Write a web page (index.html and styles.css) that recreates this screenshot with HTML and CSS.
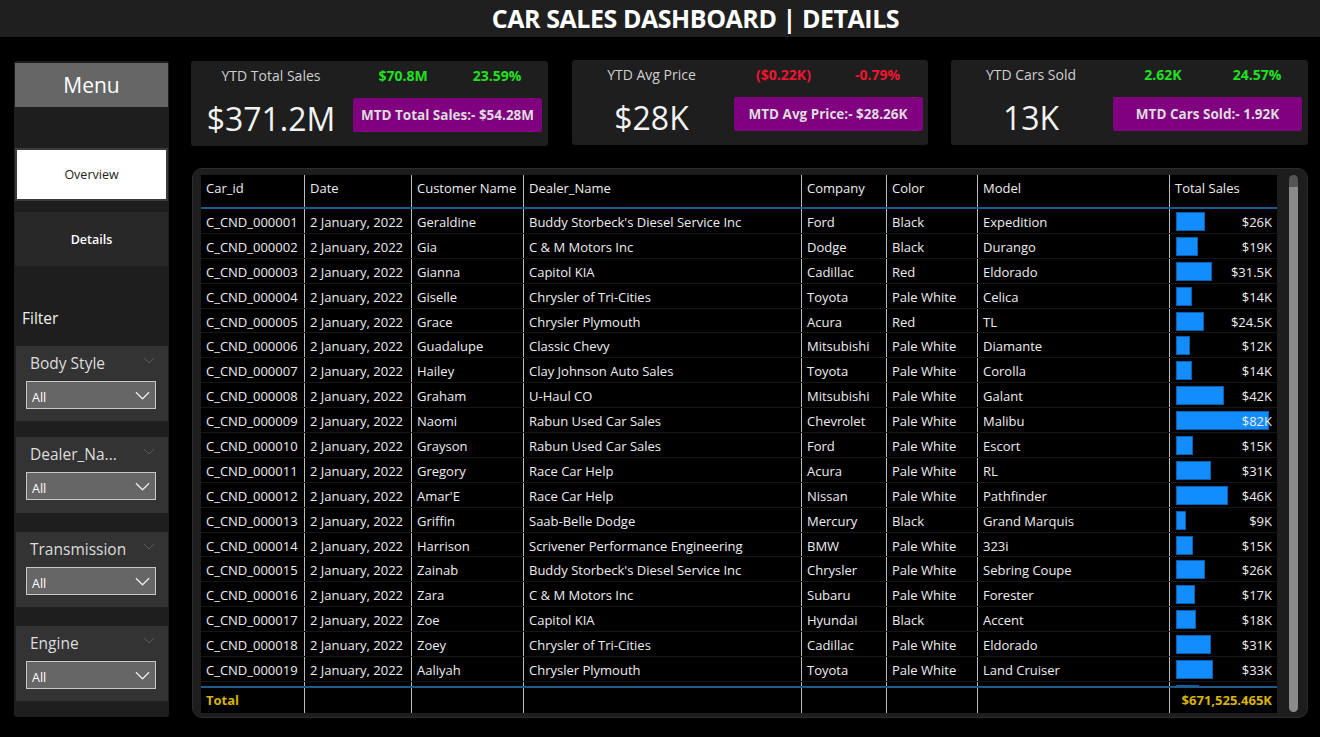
FILE: index.html
```html
<!DOCTYPE html>
<html lang="en">
<head>
<meta charset="utf-8">
<title>Car Sales Dashboard | Details</title>
<link rel="stylesheet" href="styles.css">
</head>
<body>
<header class="topbar"><h1 class="title">CAR SALES DASHBOARD | DETAILS</h1></header>
<div class="main">
  <aside class="sidebar">
    <div class="menu-btn">Menu</div>
    <div class="nav-btn nav-overview">Overview</div>
    <div class="nav-btn nav-details">Details</div>
    <div class="filter-label">Filter</div>
    <div class="slicer s1">
      <div class="slicer-title"><span>Body Style</span><svg class="chev-faint" viewBox="0 0 12 7"><path d="M1 1l5 5 5-5" fill="none" stroke="currentColor" stroke-width="1"/></svg></div>
      <div class="dropdown"><span>All</span><svg class="chev" viewBox="0 0 16 9"><path d="M1 1l7 7 7-7" fill="none" stroke="currentColor" stroke-width="1.3"/></svg></div>
    </div>
    <div class="slicer s2">
      <div class="slicer-title"><span>Dealer_Na...</span><svg class="chev-faint" viewBox="0 0 12 7"><path d="M1 1l5 5 5-5" fill="none" stroke="currentColor" stroke-width="1"/></svg></div>
      <div class="dropdown"><span>All</span><svg class="chev" viewBox="0 0 16 9"><path d="M1 1l7 7 7-7" fill="none" stroke="currentColor" stroke-width="1.3"/></svg></div>
    </div>
    <div class="slicer s3">
      <div class="slicer-title"><span>Transmission</span><svg class="chev-faint" viewBox="0 0 12 7"><path d="M1 1l5 5 5-5" fill="none" stroke="currentColor" stroke-width="1"/></svg></div>
      <div class="dropdown"><span>All</span><svg class="chev" viewBox="0 0 16 9"><path d="M1 1l7 7 7-7" fill="none" stroke="currentColor" stroke-width="1.3"/></svg></div>
    </div>
    <div class="slicer s4">
      <div class="slicer-title"><span>Engine</span><svg class="chev-faint" viewBox="0 0 12 7"><path d="M1 1l5 5 5-5" fill="none" stroke="currentColor" stroke-width="1"/></svg></div>
      <div class="dropdown"><span>All</span><svg class="chev" viewBox="0 0 16 9"><path d="M1 1l7 7 7-7" fill="none" stroke="currentColor" stroke-width="1.3"/></svg></div>
    </div>
  </aside>

  <section class="content">
    <div class="kpis">
      <div class="kpi k1">
        <div class="kpi-label">YTD Total Sales</div>
        <div class="kpi-delta up">$70.8M</div>
        <div class="kpi-pct up">23.59%</div>
        <div class="kpi-value">$371.2M</div>
        <div class="kpi-mtd">MTD Total Sales:- $54.28M</div>
      </div>
      <div class="kpi k2">
        <div class="kpi-label">YTD Avg Price</div>
        <div class="kpi-delta down">($0.22K)</div>
        <div class="kpi-pct down">-0.79%</div>
        <div class="kpi-value">$28K</div>
        <div class="kpi-mtd">MTD Avg Price:- $28.26K</div>
      </div>
      <div class="kpi k3">
        <div class="kpi-label">YTD Cars Sold</div>
        <div class="kpi-delta up">2.62K</div>
        <div class="kpi-pct up">24.57%</div>
        <div class="kpi-value">13K</div>
        <div class="kpi-mtd">MTD Cars Sold:- 1.92K</div>
      </div>
    </div>

    <div class="table-panel">
      <div class="table">
        <div class="row head">
          <div class="c">Car_id</div><div class="c">Date</div><div class="c">Customer Name</div><div class="c">Dealer_Name</div><div class="c">Company</div><div class="c">Color</div><div class="c">Model</div><div class="c">Total Sales</div>
        </div>
        <div class="body">
          <div class="row"><div class="c">C_CND_000001</div><div class="c">2 January, 2022</div><div class="c">Geraldine</div><div class="c">Buddy Storbeck's Diesel Service Inc</div><div class="c">Ford</div><div class="c">Black</div><div class="c">Expedition</div><div class="c sales"><span class="bar" style="width:29px"></span><span class="v">$26K</span></div></div>
          <div class="row"><div class="c">C_CND_000002</div><div class="c">2 January, 2022</div><div class="c">Gia</div><div class="c">C &amp; M Motors Inc</div><div class="c">Dodge</div><div class="c">Black</div><div class="c">Durango</div><div class="c sales"><span class="bar" style="width:22px"></span><span class="v">$19K</span></div></div>
          <div class="row"><div class="c">C_CND_000003</div><div class="c">2 January, 2022</div><div class="c">Gianna</div><div class="c">Capitol KIA</div><div class="c">Cadillac</div><div class="c">Red</div><div class="c">Eldorado</div><div class="c sales"><span class="bar" style="width:36px"></span><span class="v">$31.5K</span></div></div>
          <div class="row"><div class="c">C_CND_000004</div><div class="c">2 January, 2022</div><div class="c">Giselle</div><div class="c">Chrysler of Tri-Cities</div><div class="c">Toyota</div><div class="c">Pale White</div><div class="c">Celica</div><div class="c sales"><span class="bar" style="width:16px"></span><span class="v">$14K</span></div></div>
          <div class="row"><div class="c">C_CND_000005</div><div class="c">2 January, 2022</div><div class="c">Grace</div><div class="c">Chrysler Plymouth</div><div class="c">Acura</div><div class="c">Red</div><div class="c">TL</div><div class="c sales"><span class="bar" style="width:28px"></span><span class="v">$24.5K</span></div></div>
          <div class="row"><div class="c">C_CND_000006</div><div class="c">2 January, 2022</div><div class="c">Guadalupe</div><div class="c">Classic Chevy</div><div class="c">Mitsubishi</div><div class="c">Pale White</div><div class="c">Diamante</div><div class="c sales"><span class="bar" style="width:14px"></span><span class="v">$12K</span></div></div>
          <div class="row"><div class="c">C_CND_000007</div><div class="c">2 January, 2022</div><div class="c">Hailey</div><div class="c">Clay Johnson Auto Sales</div><div class="c">Toyota</div><div class="c">Pale White</div><div class="c">Corolla</div><div class="c sales"><span class="bar" style="width:16px"></span><span class="v">$14K</span></div></div>
          <div class="row"><div class="c">C_CND_000008</div><div class="c">2 January, 2022</div><div class="c">Graham</div><div class="c">U-Haul CO</div><div class="c">Mitsubishi</div><div class="c">Pale White</div><div class="c">Galant</div><div class="c sales"><span class="bar" style="width:48px"></span><span class="v">$42K</span></div></div>
          <div class="row"><div class="c">C_CND_000009</div><div class="c">2 January, 2022</div><div class="c">Naomi</div><div class="c">Rabun Used Car Sales</div><div class="c">Chevrolet</div><div class="c">Pale White</div><div class="c">Malibu</div><div class="c sales"><span class="bar" style="width:93px"></span><span class="v">$82K</span></div></div>
          <div class="row"><div class="c">C_CND_000010</div><div class="c">2 January, 2022</div><div class="c">Grayson</div><div class="c">Rabun Used Car Sales</div><div class="c">Ford</div><div class="c">Pale White</div><div class="c">Escort</div><div class="c sales"><span class="bar" style="width:17px"></span><span class="v">$15K</span></div></div>
          <div class="row"><div class="c">C_CND_000011</div><div class="c">2 January, 2022</div><div class="c">Gregory</div><div class="c">Race Car Help</div><div class="c">Acura</div><div class="c">Pale White</div><div class="c">RL</div><div class="c sales"><span class="bar" style="width:35px"></span><span class="v">$31K</span></div></div>
          <div class="row"><div class="c">C_CND_000012</div><div class="c">2 January, 2022</div><div class="c">Amar'E</div><div class="c">Race Car Help</div><div class="c">Nissan</div><div class="c">Pale White</div><div class="c">Pathfinder</div><div class="c sales"><span class="bar" style="width:52px"></span><span class="v">$46K</span></div></div>
          <div class="row"><div class="c">C_CND_000013</div><div class="c">2 January, 2022</div><div class="c">Griffin</div><div class="c">Saab-Belle Dodge</div><div class="c">Mercury</div><div class="c">Black</div><div class="c">Grand Marquis</div><div class="c sales"><span class="bar" style="width:10px"></span><span class="v">$9K</span></div></div>
          <div class="row"><div class="c">C_CND_000014</div><div class="c">2 January, 2022</div><div class="c">Harrison</div><div class="c">Scrivener Performance Engineering</div><div class="c">BMW</div><div class="c">Pale White</div><div class="c">323i</div><div class="c sales"><span class="bar" style="width:17px"></span><span class="v">$15K</span></div></div>
          <div class="row"><div class="c">C_CND_000015</div><div class="c">2 January, 2022</div><div class="c">Zainab</div><div class="c">Buddy Storbeck's Diesel Service Inc</div><div class="c">Chrysler</div><div class="c">Pale White</div><div class="c">Sebring Coupe</div><div class="c sales"><span class="bar" style="width:29px"></span><span class="v">$26K</span></div></div>
          <div class="row"><div class="c">C_CND_000016</div><div class="c">2 January, 2022</div><div class="c">Zara</div><div class="c">C &amp; M Motors Inc</div><div class="c">Subaru</div><div class="c">Pale White</div><div class="c">Forester</div><div class="c sales"><span class="bar" style="width:19px"></span><span class="v">$17K</span></div></div>
          <div class="row"><div class="c">C_CND_000017</div><div class="c">2 January, 2022</div><div class="c">Zoe</div><div class="c">Capitol KIA</div><div class="c">Hyundai</div><div class="c">Black</div><div class="c">Accent</div><div class="c sales"><span class="bar" style="width:20px"></span><span class="v">$18K</span></div></div>
          <div class="row"><div class="c">C_CND_000018</div><div class="c">2 January, 2022</div><div class="c">Zoey</div><div class="c">Chrysler of Tri-Cities</div><div class="c">Cadillac</div><div class="c">Pale White</div><div class="c">Eldorado</div><div class="c sales"><span class="bar" style="width:35px"></span><span class="v">$31K</span></div></div>
          <div class="row"><div class="c">C_CND_000019</div><div class="c">2 January, 2022</div><div class="c">Aaliyah</div><div class="c">Chrysler Plymouth</div><div class="c">Toyota</div><div class="c">Pale White</div><div class="c">Land Cruiser</div><div class="c sales"><span class="bar" style="width:37px"></span><span class="v">$33K</span></div></div>
          <div class="row"><div class="c"></div><div class="c"></div><div class="c"></div><div class="c"></div><div class="c"></div><div class="c"></div><div class="c"></div><div class="c sales"><span class="bar" style="width:23px"></span></div></div>
        </div>
        <div class="row total">
          <div class="c">Total</div><div class="c"></div><div class="c"></div><div class="c"></div><div class="c"></div><div class="c"></div><div class="c"></div><div class="c sales"><span class="v">$671,525.465K</span></div>
        </div>
      </div>
      <div class="scroll"><div class="thumb"></div></div>
    </div>
  </section>
</div>
</body>
</html>
```
FILE: styles.css
```css
* { box-sizing: border-box; }
html, body { margin: 0; padding: 0; }
body {
  width: 1320px;
  height: 737px;
  overflow: hidden;
  background: #000;
  font-family: "Open Sans", "Noto Sans", sans-serif;
  color: #eee;
}

.topbar {
  height: 37px;
  background: #1f1f1f;
  display: flex;
  align-items: center;
  justify-content: center;
}
.title {
  margin: 0;
  font-size: 25px;
  font-weight: 700;
  color: #fff;
  letter-spacing: -0.45px;
  line-height: 37px;
  padding-left: 71px;
}

.main {
  display: flex;
  gap: 22px;
  padding: 24px 12px 0 14px;
}

/* Sidebar */
.sidebar {
  width: 155px;
  height: 656px;
  background: #1e1e1e;
  border-radius: 3px;
  display: flex;
  flex-direction: column;
  padding: 2px 1px 0 2px;
}
.menu-btn {
  height: 44px;
  background: #666;
  color: #fff;
  font-size: 21px;
  display: flex;
  align-items: center;
  justify-content: center;
  margin-left: -1px;
}
.nav-btn {
  height: 53px;
  display: flex;
  align-items: center;
  justify-content: center;
  font-size: 12.5px;
  margin-left: -1px;
}
.nav-overview {
  margin-top: 41px;
  background: #fff;
  color: #222;
  border: 2px solid #3c3c3c;
}
.nav-details {
  margin-top: 11px;
  height: 54px;
  background: #282828;
  color: #fff;
  font-weight: 600;
}
.filter-label {
  margin-top: 41px;
  height: 22px;
  line-height: 22px;
  padding-left: 6px;
  font-size: 15.5px;
  color: #eee;
}
.slicer {
  height: 75px;
  background: #333;
  padding: 6px 0 0 10px;
}
.s1 { margin-top: 17px; }
.s2 { margin-top: 16px; height: 76px; }
.s3 { margin-top: 19px; }
.s4 { margin-top: 19px; }
.slicer-title {
  height: 22px;
  display: flex;
  align-items: center;
  justify-content: space-between;
  padding: 0 13px 0 4px;
  font-size: 15.5px;
  color: #ddd;
}
.chev-faint { width: 12px; height: 7px; color: #5a5a5a; margin-top: -6px; }
.dropdown {
  margin-top: 7px;
  width: 130px;
  height: 28px;
  background: #666;
  border: 1px solid #c8c8c8;
  display: flex;
  align-items: center;
  justify-content: space-between;
  padding: 4px 5px 0 5px;
  font-size: 12.5px;
  color: #fff;
}
.chev { width: 15px; height: 9px; color: #eee; margin-top: -4px; }

/* Content */
.content {
  width: 1117px;
  display: flex;
  flex-direction: column;
}
.kpis {
  display: flex;
  justify-content: space-between;
  height: 85px;
}
.kpi {
  width: 357px;
  height: 85px;
  background: #1e1e1e;
  border-radius: 3px;
  display: grid;
  grid-template-columns: 160px 104px 84px;
  grid-template-rows: 28px 57px;
  align-items: center;
}
.k2 { width: 356px; margin-top: -1px; }
.k3 { margin-top: -1px; }
.kpi-label {
  text-align: center;
  font-size: 14px;
  color: #cfcfcf;
  padding-top: 1px;
}
.kpi-delta, .kpi-pct {
  text-align: center;
  font-size: 14px;
  font-weight: 700;
}
.up { color: #22e022; }
.down { color: #f0162f; }
.kpi-value {
  text-align: center;
  font-size: 32px;
  color: #f2f2f2;
  padding-top: 2px;
}
.kpi-mtd {
  grid-column: 2 / 4;
  margin-left: 2px;
  width: 189px;
  height: 34px;
  background: #800080;
  border-radius: 2px;
  display: flex;
  align-items: center;
  justify-content: center;
  font-size: 13.5px;
  font-weight: 700;
  color: #dcdcdc;
  align-self: start;
  margin-top: 9px;
  white-space: nowrap;
}

/* Table */
.table-panel {
  margin-top: 22px;
  margin-left: 1px;
  width: 1116px;
  height: 550px;
  background: #1d1d1d;
  border: 1px solid #2c2c2c;
  border-radius: 10px;
  padding: 6px 0 3px 8px;
  display: flex;
}
.table {
  width: 1076px;
  height: 538px;
  background: #000;
  display: flex;
  flex-direction: column;
}
.row {
  display: grid;
  grid-template-columns: 104px 107px 112px 278px 85px 91px 192px 107px;
  height: 24.9px;
  border-bottom: 1px solid #161616;
}
.c {
  border-right: 1px solid #bdbdbd;
  padding: 1px 0 0 5px;
  font-size: 13px;
  line-height: 24px;
  white-space: nowrap;
  overflow: hidden;
  color: #eee;
}
.c:last-child { border-right: 0; }
.head { height: 34px; border-bottom: 2px solid #1d5a8e; }
.head .c { line-height: 26px; padding-top: 0; }
.body {
  height: 477px;
  overflow: hidden;
}
.sales {
  position: relative;
  padding: 1px 5px 0 6px;
  text-align: right;
}
.bar {
  position: absolute;
  left: 6px;
  top: 3px;
  height: 19px;
  background: #118dff;
  border: 1px solid #0d5fae;
}
.v { position: relative; }
.total {
  height: 27px;
  border-top: 2px solid #1d5a8e;
  border-bottom: 0;
}
.total .c { font-weight: 700; color: #d8b400; line-height: 24px; padding-top: 0; }

.scroll {
  width: 30px;
  height: 538px;
  display: flex;
  justify-content: center;
  padding-left: 2px;
}
.thumb {
  width: 9px;
  height: 537px;
  background: #8a8a8a;
  border-radius: 5px;
  border-top: 12px solid #555;
}
```
